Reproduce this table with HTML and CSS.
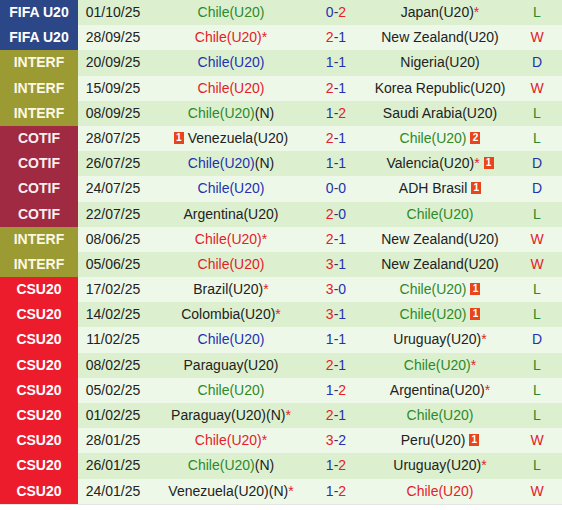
FILE: index.html
```html
<!DOCTYPE html>
<html>
<head>
<meta charset="utf-8">
<link rel="stylesheet" href="styles.css">
</head>
<body>
<div class="table">
  <div class="row odd"><div class="comp fifa">FIFA U20</div><div class="date">01/10/25</div><div class="team"><span class="g">Chile(U20)</span></div><div class="score"><span class="b">0</span>-<span class="r">2</span></div><div class="team">Japan(U20)<span class="r">*</span></div><div class="res g">L</div></div>
  <div class="row even"><div class="comp fifa">FIFA U20</div><div class="date">28/09/25</div><div class="team"><span class="r">Chile(U20)*</span></div><div class="score"><span class="r">2</span>-<span class="b">1</span></div><div class="team">New Zealand(U20)</div><div class="res r">W</div></div>
  <div class="row odd"><div class="comp interf">INTERF</div><div class="date">20/09/25</div><div class="team"><span class="b">Chile(U20)</span></div><div class="score"><span class="b">1</span>-<span class="b">1</span></div><div class="team">Nigeria(U20)</div><div class="res b">D</div></div>
  <div class="row even"><div class="comp interf">INTERF</div><div class="date">15/09/25</div><div class="team"><span class="r">Chile(U20)</span></div><div class="score"><span class="r">2</span>-<span class="b">1</span></div><div class="team">Korea Republic(U20)</div><div class="res r">W</div></div>
  <div class="row odd"><div class="comp interf">INTERF</div><div class="date">08/09/25</div><div class="team"><span class="g">Chile(U20)</span>(N)</div><div class="score"><span class="b">1</span>-<span class="r">2</span></div><div class="team">Saudi Arabia(U20)</div><div class="res g">L</div></div>
  <div class="row even"><div class="comp cotif">COTIF</div><div class="date">28/07/25</div><div class="team"><span class="card">1</span> Venezuela(U20)</div><div class="score"><span class="r">2</span>-<span class="b">1</span></div><div class="team"><span class="g">Chile(U20)</span> <span class="card">2</span></div><div class="res g">L</div></div>
  <div class="row odd"><div class="comp cotif">COTIF</div><div class="date">26/07/25</div><div class="team"><span class="b">Chile(U20)</span>(N)</div><div class="score"><span class="b">1</span>-<span class="b">1</span></div><div class="team">Valencia(U20)<span class="r">*</span> <span class="card">1</span></div><div class="res b">D</div></div>
  <div class="row even"><div class="comp cotif">COTIF</div><div class="date">24/07/25</div><div class="team"><span class="b">Chile(U20)</span></div><div class="score"><span class="b">0</span>-<span class="b">0</span></div><div class="team">ADH Brasil <span class="card">1</span></div><div class="res b">D</div></div>
  <div class="row odd"><div class="comp cotif">COTIF</div><div class="date">22/07/25</div><div class="team">Argentina(U20)</div><div class="score"><span class="r">2</span>-<span class="b">0</span></div><div class="team"><span class="g">Chile(U20)</span></div><div class="res g">L</div></div>
  <div class="row even"><div class="comp interf">INTERF</div><div class="date">08/06/25</div><div class="team"><span class="r">Chile(U20)*</span></div><div class="score"><span class="r">2</span>-<span class="b">1</span></div><div class="team">New Zealand(U20)</div><div class="res r">W</div></div>
  <div class="row odd"><div class="comp interf">INTERF</div><div class="date">05/06/25</div><div class="team"><span class="r">Chile(U20)</span></div><div class="score"><span class="r">3</span>-<span class="b">1</span></div><div class="team">New Zealand(U20)</div><div class="res r">W</div></div>
  <div class="row even"><div class="comp csu">CSU20</div><div class="date">17/02/25</div><div class="team">Brazil(U20)<span class="r">*</span></div><div class="score"><span class="r">3</span>-<span class="b">0</span></div><div class="team"><span class="g">Chile(U20)</span> <span class="card">1</span></div><div class="res g">L</div></div>
  <div class="row odd"><div class="comp csu">CSU20</div><div class="date">14/02/25</div><div class="team">Colombia(U20)<span class="r">*</span></div><div class="score"><span class="r">3</span>-<span class="b">1</span></div><div class="team"><span class="g">Chile(U20)</span> <span class="card">1</span></div><div class="res g">L</div></div>
  <div class="row even"><div class="comp csu">CSU20</div><div class="date">11/02/25</div><div class="team"><span class="b">Chile(U20)</span></div><div class="score"><span class="b">1</span>-<span class="b">1</span></div><div class="team">Uruguay(U20)<span class="r">*</span></div><div class="res b">D</div></div>
  <div class="row odd"><div class="comp csu">CSU20</div><div class="date">08/02/25</div><div class="team">Paraguay(U20)</div><div class="score"><span class="r">2</span>-<span class="b">1</span></div><div class="team"><span class="g">Chile(U20)</span><span class="r">*</span></div><div class="res g">L</div></div>
  <div class="row even"><div class="comp csu">CSU20</div><div class="date">05/02/25</div><div class="team"><span class="g">Chile(U20)</span></div><div class="score"><span class="b">1</span>-<span class="r">2</span></div><div class="team">Argentina(U20)<span class="r">*</span></div><div class="res g">L</div></div>
  <div class="row odd"><div class="comp csu">CSU20</div><div class="date">01/02/25</div><div class="team">Paraguay(U20)(N)<span class="r">*</span></div><div class="score"><span class="r">2</span>-<span class="b">1</span></div><div class="team"><span class="g">Chile(U20)</span></div><div class="res g">L</div></div>
  <div class="row even"><div class="comp csu">CSU20</div><div class="date">28/01/25</div><div class="team"><span class="r">Chile(U20)*</span></div><div class="score"><span class="r">3</span>-<span class="b">2</span></div><div class="team">Peru(U20) <span class="card">1</span></div><div class="res r">W</div></div>
  <div class="row odd"><div class="comp csu">CSU20</div><div class="date">26/01/25</div><div class="team"><span class="g">Chile(U20)</span>(N)</div><div class="score"><span class="b">1</span>-<span class="r">2</span></div><div class="team">Uruguay(U20)<span class="r">*</span></div><div class="res g">L</div></div>
  <div class="row even"><div class="comp csu">CSU20</div><div class="date">24/01/25</div><div class="team">Venezuela(U20)(N)<span class="r">*</span></div><div class="score"><span class="b">1</span>-<span class="r">2</span></div><div class="team"><span class="r">Chile(U20)</span></div><div class="res r">W</div></div>
</div>
</body>
</html>
```

FILE: styles.css
```css
html, body {
  margin: 0;
  padding: 0;
  background: #ffffff;
}

.table {
  width: 562px;
  font-family: "Liberation Sans", Arial, sans-serif;
  font-size: 14px;
  color: #222222;
  border-bottom: 1px solid #e4e4e4;
}

.row {
  display: grid;
  grid-template-columns: 78px 70px 166px 44px 164px 40px;
  height: 25.2px;
  line-height: 25px;
}

.row.odd { background: #dcf0cf; }
.row.even { background: #eef8e8; }

.row > div {
  text-align: center;
  white-space: nowrap;
}

.comp {
  color: #ffffff;
  font-weight: bold;
}

.fifa { background: #2c4787; }
.interf { background: #9b9a33; color: #fbf8e6; }
.cotif { background: #a02a41; color: #fbeef0; }
.csu { background: #ec1c2d; }

.date {
  color: #222222;
}

.score {
  color: #333366;
}

.res {
  padding-right: 10px;
}

.g { color: #2c8a2a; }
.r { color: #e4202a; }
.b { color: #2231b4; }

.card {
  display: inline-block;
  overflow: hidden;
  vertical-align: -1px;
  width: 10px;
  height: 12px;
  background: #e8451d;
  color: #ffffff;
  font-size: 10px;
  font-weight: bold;
  line-height: 12px;
  text-align: center;
}
```
